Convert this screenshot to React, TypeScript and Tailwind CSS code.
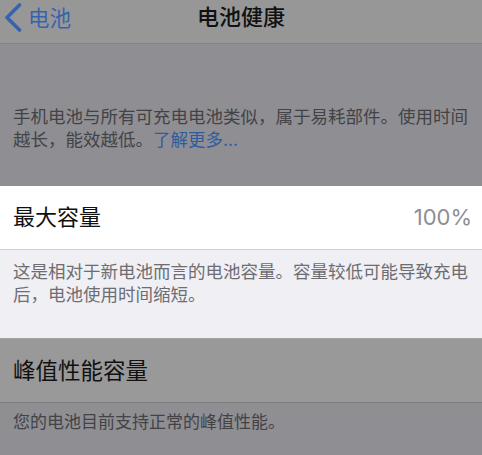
import React from "react";

const font = { fontFamily: 'Inter, "Noto Sans CJK SC", sans-serif' };

export default function App() {
  return (
    <div className="w-[482px] h-[455px] overflow-hidden bg-[#8e8e93]" style={font}>
      {/* Nav bar */}
      <div className="relative h-[44px] bg-[#979797] border-b border-[#838385]">
        <div className="absolute left-[3px] top-[3px] flex items-center">
          <svg width="20" height="29" viewBox="0 0 20 29" className="block">
            <path d="M16.5 2 L4 14.5 L16.5 27" fill="none" stroke="#3763ad" strokeWidth="3.6" strokeLinecap="round" strokeLinejoin="round" />
          </svg>
          <span className="ml-[5px] text-[21.5px] leading-[28px] text-[#3763ad]">电池</span>
        </div>
        <div className="pt-[4px] text-center text-[22px] leading-[27px] font-medium text-[#111]">电池健康</div>
      </div>

      {/* Intro footer text */}
      <div className="pt-[61px] pb-[35px] pl-[13px] pr-[8px] text-[17.5px] leading-[23px] text-[#434346]">
        手机电池与所有可充电电池类似，属于易耗部件。使用时间
        <br />
        越长，能效越低。<span className="text-[#2f5ba3]">了解更多...</span>
      </div>

      {/* Highlighted max capacity */}
      <div className="flex h-[64px] items-center justify-between bg-white pl-[13px] pr-[10px] border-b border-[#d0d0d4]">
        <span className="text-[22px] text-[#111]">最大容量</span>
        <span className="text-[22px] text-[#8e8e93]">100%</span>
      </div>
      <div className="bg-[#efeff4] pt-[10px] pb-[32px] pl-[13px] pr-[8px] text-[17.5px] leading-[23px] text-[#6d6d72]">
        这是相对于新电池而言的电池容量。容量较低可能导致充电
        <br />
        后，电池使用时间缩短。
      </div>

      {/* Peak performance */}
      <div className="flex h-[65px] items-center bg-[#999999] pl-[13px] border-t border-[#a3a3a3] border-b border-b-[#7c7c7e]">
        <span className="text-[22.5px] text-[#111]">峰值性能容量</span>
      </div>
      <div className="pt-[8px] pl-[13px] text-[17px] leading-[23px] text-[#434346]">
        您的电池目前支持正常的峰值性能。
      </div>
    </div>
  );
}
